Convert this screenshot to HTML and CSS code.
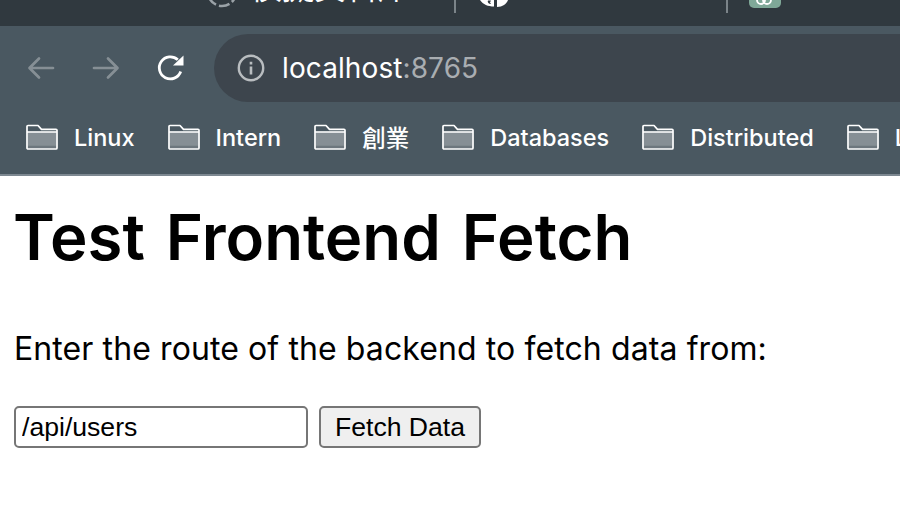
FILE: index.html
```html
<!DOCTYPE html>
<html lang="en">
<head>
<meta charset="utf-8">
<title>Test Frontend Fetch</title>
<link rel="stylesheet" href="styles.css">
</head>
<body>
<header class="chrome">
  <div class="tabstrip">
    <div class="tab tab-first">
      <svg class="spinner" width="32" height="32" viewBox="0 0 32 32"><circle cx="16" cy="16" r="14" fill="none" stroke="#9aa2a7" stroke-width="2.6" stroke-dasharray="11 3"/></svg>
      <span class="tab-title">模擬資料庫</span>
    </div>
    <div class="tab tab-second">
      <svg class="tab-logo" width="30" height="8" viewBox="0 0 30 8"><path d="M1 0h14v6.500C9 6.500 4 4.500 1 0z" fill="#fff"/><path d="M9 0.500a3 2.500 0 0 0 3 3.500l-1-1.500 1-2z" fill="#30393f"/><path d="M18 0h11c-1.500 4-5.500 7-11 7z" fill="#fff"/></svg>
      <span class="tab-faint">ChatGPT</span>
    </div>
    <div class="tab tab-third">
      <span class="green-logo"><svg width="18" height="6" viewBox="0 0 18 6"><circle cx="6" cy="0" r="4" fill="none" stroke="#fff" stroke-width="1.800"/><circle cx="12" cy="0" r="4" fill="none" stroke="#fff" stroke-width="1.800"/></svg></span>
      <span class="tab-faint">ChatGPT</span>
    </div>
  </div>
  <div class="toolbar">
    <svg class="nav-icon" width="30" height="30" viewBox="0 0 30 30"><path d="M27 15H4M13 5.500 3.500 15l9.500 9.500" fill="none" stroke="#868f95" stroke-width="2.700" stroke-linecap="round" stroke-linejoin="round"/></svg>
    <svg class="nav-icon" width="30" height="30" viewBox="0 0 30 30"><path d="M3 15h23M17 5.500 26.500 15 17 24.500" fill="none" stroke="#868f95" stroke-width="2.700" stroke-linecap="round" stroke-linejoin="round"/></svg>
    <svg class="nav-icon" width="30" height="30" viewBox="0 0 30 30"><path d="M24.700 18.500A11 11 0 1 1 21.800 6.800" fill="none" stroke="#fff" stroke-width="2.800"/><path d="M17 12.500 27.500 2.500v10z" fill="#fff"/></svg>
    <div class="omnibox">
      <svg width="28" height="28" viewBox="0 0 28 28"><circle cx="14" cy="14" r="12.200" fill="none" stroke="#b9bdc0" stroke-width="2.400"/><path d="M12.700 12.500h2.600v8h-2.600zM12.700 7.800h2.600v2.600h-2.600z" fill="#b9bdc0"/></svg>
      <span class="url">localhost<span class="port">:8765</span></span>
    </div>
  </div>
  <nav class="bookmarks">
    <a class="bookmark"><svg class="folder" width="32" height="26" viewBox="0 0 32 26"><use href="#folder"/></svg>Linux</a>
    <a class="bookmark"><svg class="folder" width="32" height="26" viewBox="0 0 32 26"><use href="#folder"/></svg>Intern</a>
    <a class="bookmark"><svg class="folder" width="32" height="26" viewBox="0 0 32 26"><use href="#folder"/></svg>創業</a>
    <a class="bookmark"><svg class="folder" width="32" height="26" viewBox="0 0 32 26"><use href="#folder"/></svg>Databases</a>
    <a class="bookmark"><svg class="folder" width="32" height="26" viewBox="0 0 32 26"><use href="#folder"/></svg>Distributed</a>
    <a class="bookmark"><svg class="folder" width="32" height="26" viewBox="0 0 32 26"><use href="#folder"/></svg>Learning</a>
  </nav>
</header>
<svg class="defs" width="0" height="0">
  <defs>
    <g id="folder">
      <path d="M1.500 7.500h29v16a1 1 0 0 1-1 1h-27a1 1 0 0 1-1-1z" fill="#868f95"/>
      <path d="M1.500 21.800h29v2a.8.8 0 0 1-.8.8H2.300a.8.8 0 0 1-.8-.8z" fill="#6d777e"/>
      <path d="M1 24V2.500a1 1 0 0 1 1-1h10l3.500 3.800H30a1 1 0 0 1 1 1V24a1 1 0 0 1-1 1H2a1 1 0 0 1-1-1zM1 8h30" fill="none" stroke="#fff" stroke-width="1.700" stroke-linejoin="round"/>
    </g>
  </defs>
</svg>
<main class="page">
  <h1 class="title">Test Frontend Fetch</h1>
  <p class="prompt">Enter the route of the backend to fetch data from:</p>
  <form class="fetch-form">
    <input class="route" type="text" value="/api/users">
    <button class="fetch" type="button">Fetch Data</button>
  </form>
</main>
</body>
</html>
```
FILE: styles.css
```css
* { box-sizing: border-box; }
html, body { margin: 0; height: 100%; overflow: hidden; background: #fff; }
body { font-family: "Inter", "Noto Sans CJK TC", sans-serif; color: #000; }
.defs { display: block; height: 0; }

.chrome { display: flex; flex-direction: column; height: 176px; border-bottom: 2px solid #7d8891; background: #4a5861; }

.tabstrip { flex: none; height: 26px; background: #30393f; overflow: hidden; display: flex; align-items: flex-start; }
.tab { flex: none; display: flex; align-items: flex-end; height: 8px; gap: 12px; }
.tab-first { margin-left: 206px; width: 248px; }
.tab-second { width: 272px; border-left: 2px solid #7b8489; height: 13px; padding-left: 23px; gap: 20px; }
.tab-third { border-left: 2px solid #7b8489; height: 13px; padding-left: 21px; gap: 18px; }
.tab svg, .tab span { flex: none; }
.tab-title { color: #fff; font-size: 32px; line-height: 40px; }
.tab-faint { color: #8d9498; font-size: 24px; line-height: 30px; margin-bottom: 9px; }
.tab-logo { margin-bottom: 5px; }
.green-logo { width: 32px; height: 34px; background: #7fa898; border-radius: 0 0 5px 5px; display: flex; align-items: flex-end; justify-content: flex-start; padding-left: 6px; padding-bottom: 2px; margin-bottom: 5px; }

.toolbar { flex: none; height: 84px; padding: 0 0 0 26px; display: flex; align-items: center; }
.nav-icon { flex: none; margin-right: 35px; }
.nav-icon:nth-child(3) { margin-right: 28px; }
.omnibox { flex: 1; height: 68px; background: #3d454d; border-radius: 34px 0 0 34px; display: flex; align-items: center; padding-left: 23px; gap: 17px; }
.url { color: #fff; font-size: 28px; letter-spacing: .1px; }
.port { color: #a9adb1; }

.bookmarks { flex: 1; display: flex; align-items: center; overflow: hidden; padding-left: 26px; gap: 33px; padding-bottom: 10px; }
.bookmark { flex: none; display: flex; align-items: center; gap: 16px; color: #fff; font-size: 23.5px; font-weight: 500; }

.page { padding: 0 14px; }
.title { margin: 25px 0 0 -1px; font-size: 63.5px; line-height: 72px; font-weight: 600; word-spacing: 5px; }
.prompt { margin: 56px 0 0; font-size: 32px; line-height: 40px; letter-spacing: .1px; }
.fetch-form { display: flex; gap: 11px; margin-top: 37px; }
.route { width: 294px; height: 42px; padding: 0 6px; font-family: "Liberation Sans", sans-serif; font-size: 26.6px; border: 2px solid #767676; border-radius: 5px; background: #fff; color: #000; }
.fetch { height: 42px; width: 162px; padding: 0; font-family: "Liberation Sans", sans-serif; font-size: 26.6px; border: 2px solid #767676; border-radius: 5px; background: #efefef; color: #000; }
```
